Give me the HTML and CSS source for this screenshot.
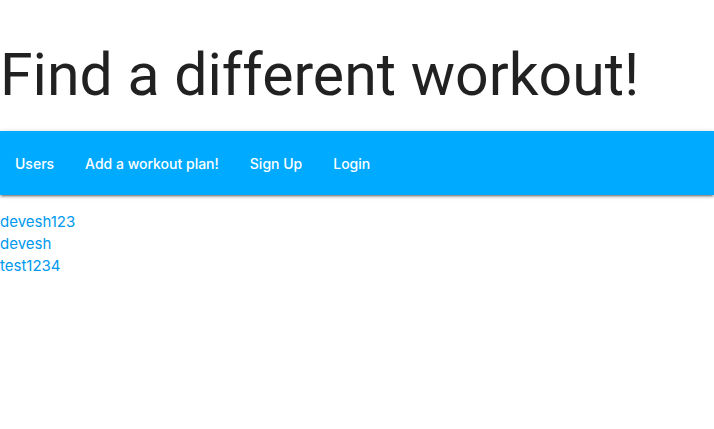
FILE: index.html
```html
<!DOCTYPE html>
<html lang="en">
<head>
<meta charset="utf-8">
<meta name="viewport" content="width=device-width, initial-scale=1">
<title>Find a different workout!</title>
<link rel="stylesheet" href="styles.css">
</head>
<body>
<header>
<h1 class="title">Find a different workout!</h1>
<nav class="navbar">
<a href="#">Users</a>
<a href="#">Add a workout plan!</a>
<a href="#">Sign Up</a>
<a href="#">Login</a>
</nav>
</header>
<main>
<ul class="users">
<li><a href="#">devesh123</a></li>
<li><a href="#">devesh</a></li>
<li><a href="#">test1234</a></li>
</ul>
</main>
</body>
</html>
```
FILE: styles.css
```css
body {
  margin: 0;
  background: #fff;
  color: rgba(0, 0, 0, 0.87);
  font-family: Inter, "Liberation Sans", sans-serif;
  font-size: 15px;
  line-height: 22px;
}

a {
  text-decoration: none;
}

.title {
  margin: 0;
  padding: 42px 0 23px;
  font-family: Roboto, "Liberation Sans", sans-serif;
  font-size: 59px;
  font-weight: 400;
  line-height: 66px;
}

.navbar {
  display: flex;
  gap: 1px;
  height: 64px;
  background: #00aaff;
  box-shadow: 0 2px 2px 0 rgba(0, 0, 0, 0.2), 0 3px 1px -2px rgba(0, 0, 0, 0.2), 0 1px 5px 0 rgba(0, 0, 0, 0.2);
}

.navbar a {
  padding: 0 15px;
  color: #fff;
  font-size: 14px;
  font-weight: 500;
  line-height: 66px;
}

.users {
  margin: 16px 0;
  padding: 0;
  list-style: none;
}

.users a {
  color: #0099ee;
}
```
